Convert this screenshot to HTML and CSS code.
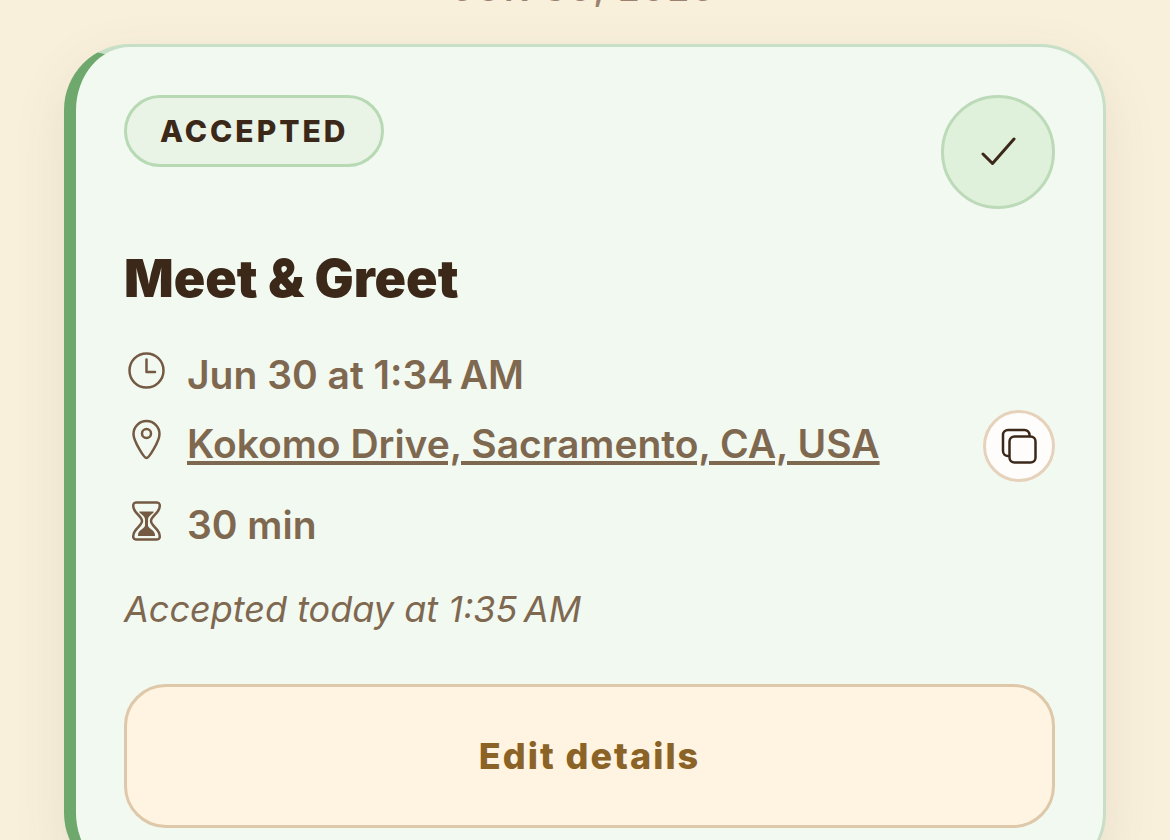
FILE: index.html
```html
<!DOCTYPE html>
<html lang="en">
<head>
<meta charset="utf-8">
<title>Meet &amp; Greet</title>
<link rel="stylesheet" href="styles.css">
</head>
<body>
<main class="timeline">
  <p class="date">JUN 30, 2026</p>
  <article class="card">
    <header class="card-head">
      <span class="badge">ACCEPTED</span>
      <span class="status" aria-hidden="true">
        <svg width="36" height="30" viewBox="0 0 36 30"><path d="M3 17 12.500 26.500 34 2"/></svg>
      </span>
    </header>
    <h1 class="title">Meet &amp; Greet</h1>
    <ul class="details">
      <li class="row">
        <svg class="icon" viewBox="0 0 44 44"><circle cx="22.500" cy="21.500" r="17"/><path d="M22.500 10.500V23H31"/></svg>
        <span>Jun 30 at 1:34&#8239;AM</span>
      </li>
      <li class="row">
        <svg class="icon" viewBox="0 0 44 44"><path d="M22.500 40C20 40 9.500 23 9.500 16a13 13 0 0 1 26 0C35.500 23 25 40 22.500 40Z"/><circle cx="22.500" cy="15.500" r="4.500"/></svg>
        <a class="place" href="#map">Kokomo Drive, Sacramento, CA, USA</a>
        <button class="copy" type="button" aria-label="Copy address">
          <svg width="36" height="36" viewBox="0 0 36 36"><path d="M28.500 8V7a5 5 0 0 0-5-5H7A5 5 0 0 0 2 7v16A5 5 0 0 0 7 28"/><rect x="8.500" y="8.500" width="26" height="26" rx="5"/></svg>
        </button>
      </li>
      <li class="row">
        <svg class="icon" viewBox="0 0 44 44"><path d="M12 3.500H33C36 3.500 36 6.500 35.500 8.500C34.500 14.500 27 17.500 27 22C27 26.500 34.500 29.500 35.500 35.500C36 38 36 40.500 33 40.500H12C9 40.500 9 38 9.500 35.500C10.500 29.500 18 26.500 18 22C18 17.500 10.500 14.500 9.500 8.500C9 6.500 9 3.500 12 3.500Z"/><path class="sand" d="M15.500 12.500H29.500C30 13 29.500 13.500 29 14C26 16.500 24 18 24 20.500V26.500C24 29.500 31 31 31 36V37H14V36C14 31 21 29.500 21 26.500V20.500C21 18 19 16.500 16 14C15.500 13.500 15 13 15.500 12.500Z"/></svg>
        <span>30 min</span>
      </li>
    </ul>
    <p class="note">Accepted today at 1:35&#8239;AM</p>
    <button class="edit" type="button">Edit details</button>
  </article>
</main>
</body>
</html>
```
FILE: styles.css
```css
* {
  box-sizing: border-box;
}

body {
  margin: 0;
  height: 100vh;
  overflow: hidden;
  background: #f9f0dc;
  color: #3b2819;
  font-family: Inter, "Liberation Sans", sans-serif;
}

.timeline {
  margin-top: -32px;
  padding: 0 64px 48px;
}

.date {
  margin: 0 0 34px;
  color: #9b8370;
  font-size: 34px;
  font-weight: 600;
  line-height: 42px;
  letter-spacing: 3px;
  text-align: center;
}

.card {
  padding: 48px;
  border: 3px solid #c6dfc6;
  border-left: 12px solid #6ea86c;
  border-radius: 66px;
  background: #f2f9f1;
  box-shadow: 0 18px 54px rgba(80, 66, 50, 0.1);
}

.card-head {
  display: flex;
  justify-content: space-between;
  align-items: flex-start;
}

.badge {
  padding: 0 33px;
  border: 3px solid #b7d9b3;
  border-radius: 36px;
  background: #e9f4e7;
  font-size: 30px;
  font-weight: 800;
  line-height: 66px;
  letter-spacing: 3px;
}

.status {
  display: grid;
  place-items: center;
  width: 114px;
  height: 114px;
  border: 3px solid #bcdab8;
  border-radius: 50%;
  background: #dff0db;
}

svg {
  flex: none;
  fill: none;
  stroke: currentColor;
  stroke-width: 3;
  stroke-linecap: round;
  stroke-linejoin: round;
}

.title {
  margin: 40px 0;
  font-size: 52px;
  font-weight: 900;
  line-height: 60px;
}

.details {
  display: grid;
  gap: 17px;
  margin: 0;
  padding: 0;
  list-style: none;
  color: #7f6850;
  font-size: 39px;
  font-weight: 600;
  line-height: 52px;
}

.row {
  display: flex;
  align-items: flex-start;
}

.icon {
  width: 44px;
  height: 44px;
  margin-right: 19px;
  color: #745a43;
  stroke-width: 2.5;
}

.sand {
  fill: currentColor;
  stroke: none;
}

.place {
  color: inherit;
  text-decoration-thickness: 4px;
  text-underline-offset: 3px;
}

.copy {
  display: grid;
  place-items: center;
  width: 72px;
  height: 72px;
  margin: -8px 0 0 auto;
  padding: 0;
  border: 3px solid #e6d2bb;
  border-radius: 50%;
  background: #fffdfc;
  color: #3b2819;
}

.copy svg {
  stroke-width: 2.5;
}

.note {
  margin: 36px 0 53px;
  color: #7f6850;
  font-size: 36px;
  font-style: italic;
  line-height: 44px;
}

.edit {
  display: block;
  width: 100%;
  padding: 0;
  border: 3px solid #dec8a9;
  border-radius: 42px;
  background: #fff4e2;
  color: #8b6327;
  font-family: inherit;
  font-size: 36px;
  font-weight: 800;
  line-height: 138px;
  letter-spacing: 2px;
}
```
